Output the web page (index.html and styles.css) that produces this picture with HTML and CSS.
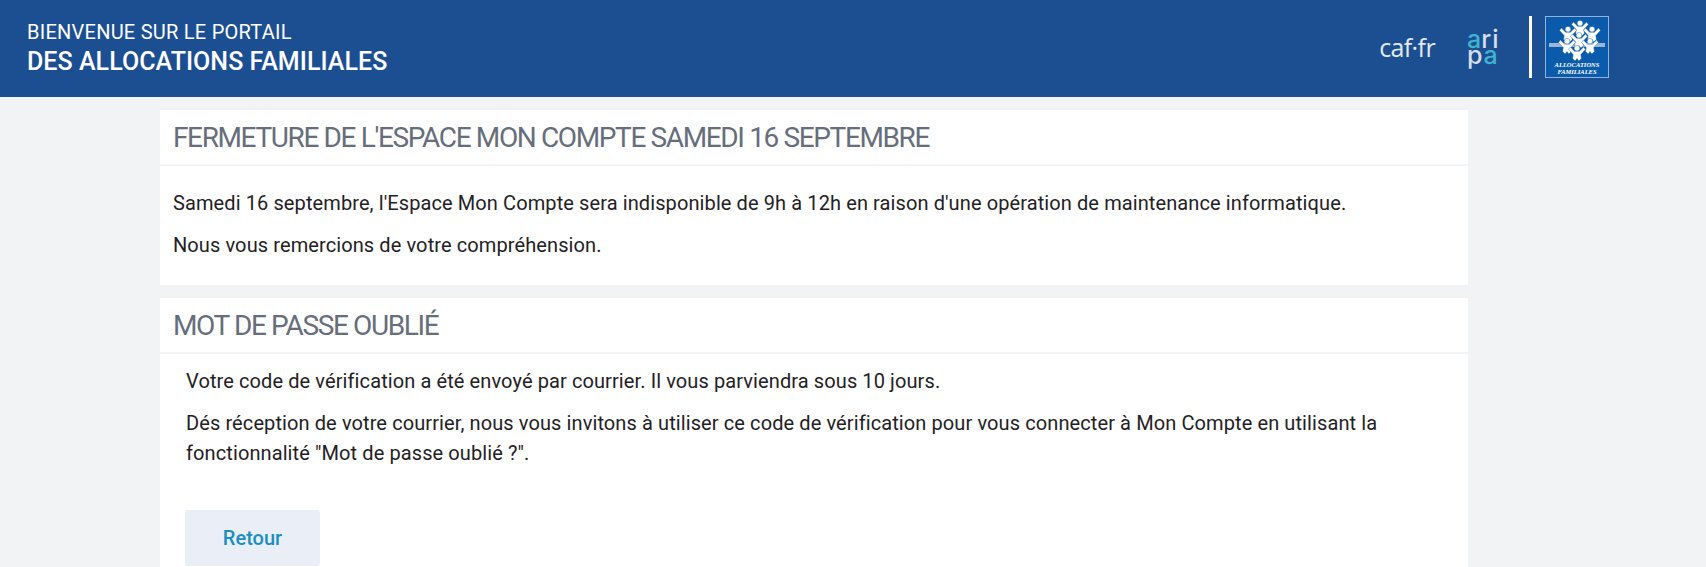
FILE: index.html
```html
<!DOCTYPE html>
<html lang="fr">
  <head>
    <meta charset="UTF-8" />
    <meta name="viewport" content="width=device-width, initial-scale=1.0" />
    <title>Mot de passe oublié</title>
    <link rel="stylesheet" href="styles.css">
  </head>
  <body>
    <header class="header">
      <div class="header-title">
        <div class="header-line">BIENVENUE SUR LE PORTAIL</div>
        <div class="header-strong">DES ALLOCATIONS FAMILIALES</div>
      </div>
      <div class="header-logos">
        <span class="logo-caf">caf·fr</span>
        <span class="logo-aripa">
          <span class="aripa-row"><b>a</b><i>ri</i></span>
          <span class="aripa-row"><i>p</i><b>a</b></span>
        </span>
        <span class="logo-sep"></span>
        <div class="logo-allocations">
          <svg class="logo-kids" viewBox="0 0 62 44" width="62" height="44">
            <defs>
              <g id="kid">
                <circle cx="0" cy="-4.8" r="2.8" />
                <path d="M-8.5 -3.6 L-6.6 -6 L-2.4 -1.8 L2.4 -1.8 L6.6 -6 L8.5 -3.6 L3.8 1.6 L4.4 5.6 L1.8 8 L0 5.6 L-1.8 8 L-4.4 5.6 L-3.8 1.6 Z" />
              </g>
            </defs>
            <rect class="kids-bar" x="3" y="26" width="56" height="4" />
            <g fill="#fff" stroke="#0a5bab" stroke-width="0.4">
              <use href="#kid" x="34" y="11" />
              <use href="#kid" x="22" y="17" />
              <use href="#kid" x="46" y="17" />
              <use href="#kid" x="33" y="23" />
              <use href="#kid" x="21" y="29" />
              <use href="#kid" x="44" y="29" />
              <use href="#kid" x="31" y="36" />
            </g>
          </svg>
          <div class="logo-caption">ALLOCATIONS<br />FAMILIALES</div>
        </div>
      </div>
    </header>

    <main class="content">
      <section class="card">
        <h2 class="card-title">FERMETURE DE L'ESPACE MON COMPTE SAMEDI 16 SEPTEMBRE</h2>
        <div class="card-body">
          <p>Samedi 16 septembre, l'Espace Mon Compte sera indisponible de 9h à 12h en raison d'une opération de maintenance informatique.</p>
          <p>Nous vous remercions de votre compréhension.</p>
        </div>
      </section>

      <section class="card">
        <h2 class="card-title">MOT DE PASSE OUBLIÉ</h2>
        <div class="card-body card-body-inset">
          <p>Votre code de vérification a été envoyé par courrier. Il vous parviendra sous 10 jours.</p>
          <p>Dés réception de votre courrier, nous vous invitons à utiliser ce code de vérification pour vous connecter à Mon Compte en utilisant la fonctionnalité "Mot de passe oublié ?".</p>
          <button class="btn-back" type="button">Retour</button>
        </div>
      </section>
    </main>
  </body>
</html>
```

FILE: styles.css
```css
* {
  box-sizing: border-box;
  margin: 0;
  padding: 0;
}

html,
body {
  height: 567px;
  overflow: hidden;
}

body {
  font-family: Roboto, "Liberation Sans", sans-serif;
  background-color: #f2f3f5;
  color: #1f2125;
}

.header {
  display: flex;
  justify-content: space-between;
  align-items: center;
  height: 97px;
  padding: 0 97px 0 27px;
  background-color: #1c4e92;
  color: #fff;
}

.header-line {
  font-size: 20px;
  line-height: 24px;
  letter-spacing: 0.25px;
}

.header-strong {
  margin-top: 3px;
  font-size: 25px;
  line-height: 30px;
  font-weight: 500;
  letter-spacing: 0.05px;
}

.header-logos {
  display: flex;
  align-items: center;
  margin-top: -3px;
}

.logo-caf {
  font-family: "Open Sans", sans-serif;
  font-size: 25px;
  letter-spacing: -0.6px;
  color: #e4e9f1;
  margin-right: 32px;
}

.logo-aripa {
  display: flex;
  flex-direction: column;
  width: 30px;
  font-family: Inter, sans-serif;
  font-size: 25px;
  line-height: 16px;
  margin-right: 32px;
}

.aripa-row {
  display: flex;
  justify-content: space-between;
}

.logo-aripa b {
  font-weight: 500;
  color: #3fb4d0;
}

.logo-aripa i {
  font-style: normal;
  font-weight: 500;
  letter-spacing: 1px;
  color: #d5deea;
}

.logo-sep {
  width: 3px;
  height: 62px;
  margin-right: 13px;
  background: #fff;
}

.logo-allocations {
  display: flex;
  flex-direction: column;
  align-items: center;
  width: 64px;
  height: 62px;
  background: #0a5bab;
  border: 1px solid #8fb5de;
}

.logo-kids {
  display: block;
}

.kids-bar {
  fill: #9db6d8;
}

.logo-caption {
  font-family: "Liberation Serif", serif;
  font-size: 6.5px;
  line-height: 7px;
  font-style: italic;
  font-weight: 700;
  text-align: center;
  color: #fff;
}

.content {
  display: flex;
  flex-direction: column;
  gap: 13px;
  width: 1308px;
  margin: 13px 0 0 160px;
}

.card {
  background: #fff;
}

.card-title {
  height: 56px;
  padding: 0 13px;
  border-bottom: 2px solid #f3f4f6;
  font-size: 28px;
  line-height: 56px;
  font-weight: 400;
  letter-spacing: -1.37px;
  color: #666e7b;
}

.card-body {
  padding: 22px 13px 13px;
  font-size: 20px;
  line-height: 30px;
  letter-spacing: 0.1px;
}

.card-body p {
  margin-bottom: 12px;
}

.card-body-inset {
  padding: 12px 26px 17px 26px;
}

.btn-back {
  display: block;
  width: 135px;
  height: 56px;
  margin: 42px 0 0 -1px;
  border: 0;
  border-radius: 3px;
  background: #eaeef6;
  font-family: inherit;
  font-size: 20px;
  font-weight: 500;
  color: #1a8fc0;
}
```
